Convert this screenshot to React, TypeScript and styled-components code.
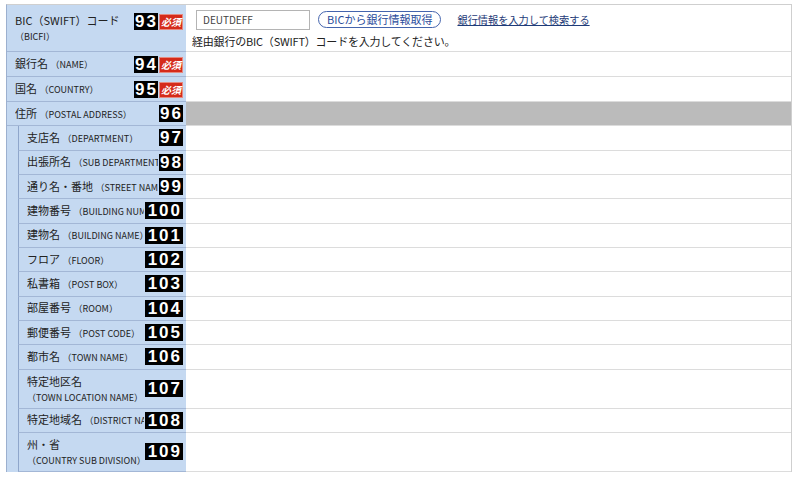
import styled, { createGlobalStyle } from 'styled-components';

const GlobalStyle = createGlobalStyle`
  *, *::before, *::after {
    box-sizing: border-box;
  }
  html, body {
    margin: 0;
    padding: 0;
    background: #ffffff;
  }
  body {
    font-family: "Noto Sans CJK JP", "Noto Sans", sans-serif;
    color: #222222;
  }
`;

const Page = styled.div`
  padding: 4px 8px 0 6px;
`;

const Table = styled.div`
  border-top: 1px solid #cfcfcf;
  border-right: 1px solid #cfcfcf;
  border-left: 1px solid #9cb0cf;
`;

const Row = styled.div`
  display: flex;
  align-items: stretch;
`;

const Label = styled.div<{ $nested?: boolean }>`
  width: 179px;
  flex-shrink: 0;
  display: flex;
  background: #c5d9f1;
  padding-left: ${(p) => (p.$nested ? '11px' : '0')};
`;

const LabelInner = styled.div<{ $nested?: boolean; $top?: boolean; $tall?: boolean }>`
  flex: 1;
  min-width: 0;
  min-height: ${(p) => (p.$tall ? '25px' : '24.33px')};
  display: flex;
  align-items: ${(p) => (p.$top ? 'flex-start' : 'center')};
  gap: 1px;
  padding: 3px 3px 3px 8px;
  border-bottom: 1px solid #a3b7d6;
  border-left: ${(p) => (p.$nested ? '1px solid #8fa6cb' : 'none')};
`;

const LabelText = styled.div<{ $wrap?: boolean }>`
  flex: 1;
  min-width: 0;
  overflow: hidden;
  white-space: nowrap;
  font-size: 11px;
  line-height: ${(p) => (p.$wrap ? '15px' : '14px')};
  padding-top: ${(p) => (p.$wrap ? '1px' : '0')};
  align-self: center;
`;

const En = styled.span`
  font-size: 9px;
`;

const Num = styled.span<{ $digits: number }>`
  flex-shrink: 0;
  display: inline-block;
  height: 17px;
  line-height: 17px;
  padding: ${(p) => (p.$digits > 2 ? '0 1px 0 3px' : '0 0 0 1px')};
  background: #000000;
  color: #ffffff;
  font-family: "Liberation Sans", "Arimo", sans-serif;
  font-weight: bold;
  font-size: 17px;
  letter-spacing: 2px;
`;

const Required = styled.span`
  flex-shrink: 0;
  display: inline-block;
  width: 24px;
  height: 16px;
  margin-top: 1px;
  border: 1px solid #e58a80;
  background: #d52b1b;
  color: #ffffff;
  font-size: 10px;
  line-height: 14px;
  font-style: italic;
  font-weight: bold;
  text-align: center;
`;

const Badges = styled.div<{ $top?: boolean }>`
  flex-shrink: 0;
  display: flex;
  align-items: flex-start;
  gap: 1px;
  margin-top: ${(p) => (p.$top ? '5px' : '0')};
`;

const Value = styled.div<{ $gray?: boolean }>`
  flex: 1;
  min-width: 0;
  background: ${(p) => (p.$gray ? '#bbbbbb' : '#ffffff')};
  border-bottom: 1px solid #dcdcdc;
  padding: 4px 6px 3px 6px;
`;

const Controls = styled.div`
  display: flex;
  align-items: center;
  height: 21px;
`;

const Input = styled.div`
  width: 114px;
  height: 20px;
  margin-left: 4px;
  border: 1px solid #b4b4b4;
  padding-left: 6px;
  font-size: 10px;
  line-height: 18px;
  color: #444444;
`;

const PillButton = styled.button`
  margin-left: 8px;
  height: 17px;
  padding: 0 8px;
  border: 1px solid #4464ad;
  border-radius: 9px;
  background: #ffffff;
  color: #2a4c9b;
  font-family: "Noto Sans CJK JP", sans-serif;
  font-size: 11px;
  line-height: 15px;
`;

const Link = styled.a`
  margin-left: 16px;
  font-size: 10.2px;
  color: #1e3b78;
  text-decoration: underline;
`;

const Help = styled.div`
  margin-top: 4px;
  font-size: 11px;
  line-height: 14px;
  letter-spacing: -0.2px;
`;

type Item = { ja: string; en: string; no: string; wrap?: boolean };

const nestedItems: Item[] = [
  { ja: '支店名', en: 'DEPARTMENT', no: '97' },
  { ja: '出張所名', en: 'SUB DEPARTMENT', no: '98' },
  { ja: '通り名・番地', en: 'STREET NAME', no: '99' },
  { ja: '建物番号', en: 'BUILDING NUMBER', no: '100' },
  { ja: '建物名', en: 'BUILDING NAME', no: '101' },
  { ja: 'フロア', en: 'FLOOR', no: '102' },
  { ja: '私書箱', en: 'POST BOX', no: '103' },
  { ja: '部屋番号', en: 'ROOM', no: '104' },
  { ja: '郵便番号', en: 'POST CODE', no: '105' },
  { ja: '都市名', en: 'TOWN NAME', no: '106' },
  { ja: '特定地区名', en: 'TOWN LOCATION NAME', no: '107', wrap: true },
  { ja: '特定地域名', en: 'DISTRICT NAME', no: '108' },
  { ja: '州・省', en: 'COUNTRY SUB DIVISION', no: '109', wrap: true },
];

function Badge({ no }: { no: string }) {
  return <Num $digits={no.length}>{no}</Num>;
}

function SimpleRow({ ja, en, no, required }: Item & { required?: boolean }) {
  return (
    <Row>
      <Label>
        <LabelInner $tall>
          <LabelText>
            {ja} <En>（{en}）</En>
          </LabelText>
          <Badges>
            <Badge no={no} />
            {required && <Required>必須</Required>}
          </Badges>
        </LabelInner>
      </Label>
      <Value />
    </Row>
  );
}

export default function App() {
  return (
    <>
      <GlobalStyle />
      <Page>
        <Table>
          <Row>
            <Label>
              <LabelInner $top>
                <LabelText $wrap>
                  BIC（SWIFT）コード
                  <br />
                  <En>（BICFI）</En>
                </LabelText>
                <Badges $top>
                  <Badge no="93" />
                  <Required>必須</Required>
                </Badges>
              </LabelInner>
            </Label>
            <Value>
              <Controls>
                <Input>DEUTDEFF</Input>
                <PillButton type="button">BICから銀行情報取得</PillButton>
                <Link href="#">銀行情報を入力して検索する</Link>
              </Controls>
              <Help>経由銀行のBIC（SWIFT）コードを入力してください。</Help>
            </Value>
          </Row>
          <SimpleRow ja="銀行名" en="NAME" no="94" required />
          <SimpleRow ja="国名" en="COUNTRY" no="95" required />
          <Row>
            <Label>
              <LabelInner>
                <LabelText>
                  住所 <En>（POSTAL ADDRESS）</En>
                </LabelText>
                <Badges>
                  <Badge no="96" />
                </Badges>
              </LabelInner>
            </Label>
            <Value $gray />
          </Row>
          {nestedItems.map((item) => (
            <Row key={item.no}>
              <Label $nested>
                <LabelInner $nested>
                  <LabelText $wrap={item.wrap}>
                    {item.ja}
                    {item.wrap ? <br /> : ' '}
                    <En>（{item.en}）</En>
                  </LabelText>
                  <Badges>
                    <Badge no={item.no} />
                  </Badges>
                </LabelInner>
              </Label>
              <Value />
            </Row>
          ))}
        </Table>
      </Page>
    </>
  );
}
